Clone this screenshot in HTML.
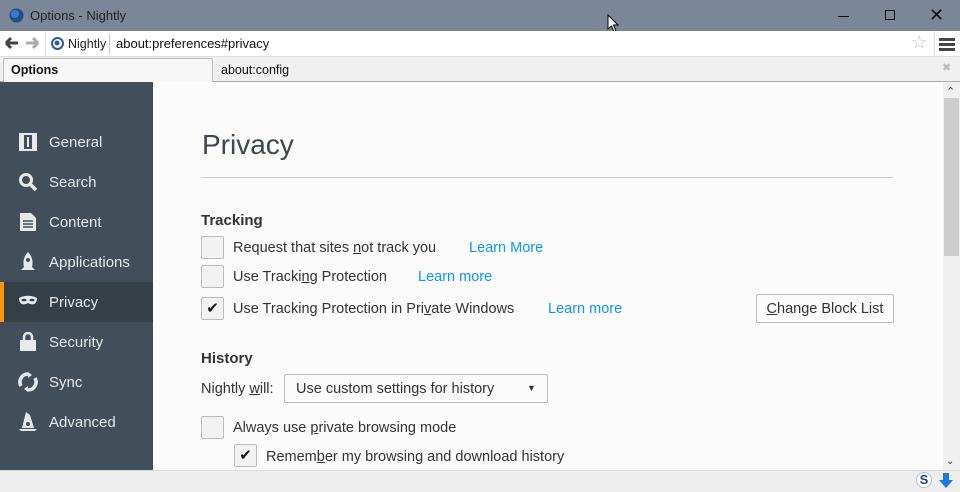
<!DOCTYPE html>
<html><head><meta charset="utf-8"><style>
*{margin:0;padding:0;box-sizing:border-box}
body{width:960px;height:492px;overflow:hidden;font-family:"Segoe UI","Liberation Sans",sans-serif;background:#fbfbfb;position:relative;color:#333}
.abs{position:absolute}
#title{left:0;top:0;width:960px;height:31px;background:#7b8799}
#title span{position:absolute;left:30px;top:8px;font-size:13px;color:#222}
#nav{left:0;top:31px;width:960px;height:26px;background:#fff;border-bottom:1px solid #ddd}
#tabs{left:0;top:57px;width:960px;height:25px;background:#f0f0f0;border-bottom:1px solid #aaa}
#side{left:0;top:82px;width:153px;height:388px;background:#424f5a}
.item{position:absolute;left:0;width:153px;height:40px;color:#e6e9ec;font-size:15px}
.item span{position:absolute;left:49px;top:12px}
.item svg{position:absolute;left:18px;top:10px}
.sel{background:#343f48}
.sel:before{content:"";position:absolute;left:0;top:0;width:4px;height:40px;background:#ff9500}
.cb{position:absolute;left:201px;width:23px;height:23px;border:1px solid #bbb;border-radius:2px;background:#f2f2f2}
.t{position:absolute;font-size:14.5px;color:#333}
.l{position:absolute;font-size:14.5px;color:#0996f8}
h2{position:absolute;font-size:15px;font-weight:bold;color:#333}
</style></head><body>
<div id="title" class="abs">
<svg class="abs" style="left:9px;top:8px" width="15" height="15"><circle cx="7.5" cy="7.5" r="7" fill="#1f4e8c"/><circle cx="6" cy="6" r="4" fill="#3a7bd5"/></svg>
<span>Options - Nightly</span>
<div class="abs" style="left:838px;top:16px;width:11px;height:1px;background:#111"></div>
<div class="abs" style="left:885px;top:10px;width:10px;height:10px;border:1px solid #111"></div>
<div class="abs" style="left:929px;top:5px;font-size:18px;color:#111">✕</div>
<svg class="abs" style="left:607px;top:14px" width="14" height="20"><path d="M1 1 L1 15 L4.5 12 L7 18 L9 17 L6.5 11 L11 11 Z" fill="#fff" stroke="#000"/></svg>
</div>
<div id="nav" class="abs">
<svg class="abs" style="left:4px;top:5px" width="38" height="14"><path d="M2 7 H14 M2 7 L7 2 M2 7 L7 12" stroke="#444" stroke-width="3" fill="none"/><path d="M22 7 H34 M34 7 L29 2 M34 7 L29 12" stroke="#aaa" stroke-width="3" fill="none"/></svg>
<div class="abs" style="left:45px;top:0;width:1px;height:25px;background:#ddd"></div>
<svg class="abs" style="left:51px;top:6px" width="13" height="13"><circle cx="6.5" cy="6.5" r="5.5" fill="#fff" stroke="#2a5aa0" stroke-width="2"/><circle cx="6" cy="6" r="2.5" fill="#2a5aa0"/></svg>
<div class="abs" style="left:68px;top:6px;font-size:12.5px;color:#222">Nightly</div>
<div class="abs" style="left:109px;top:3px;width:1px;height:20px;background:#ccc"></div>
<div class="abs" style="left:116px;top:5px;font-size:13px;color:#111">about:preferences#privacy</div>
<div class="abs" style="left:911px;top:1px;font-size:18px;color:#bbb">☆</div>
<div class="abs" style="left:934px;top:0;width:1px;height:26px;background:#ddd"></div>
<div class="abs" style="left:939px;top:7px;width:16px;height:3px;background:#444;box-shadow:0 5px 0 #444,0 10px 0 #444"></div>
</div>
<div id="tabs" class="abs">
<div class="abs" style="left:3px;top:1px;width:210px;height:24px;background:#f7f7f7;border:1px solid #bbb;border-bottom:none;border-radius:2px 2px 0 0"></div>
<div class="abs" style="left:11px;top:6px;font-size:12.5px;font-weight:bold;color:#111">Options</div>
<div class="abs" style="left:221px;top:6px;font-size:12.5px;color:#111">about:config</div>
<div class="abs" style="left:942px;top:4px;font-size:11px;color:#bbb">✖</div>
</div>
<div id="side" class="abs">
<div class="item" style="top:40px"><svg width="20" height="20"><rect x="1" y="1" width="18" height="18" fill="#e6e9ec"/><rect x="6" y="3" width="8" height="14" fill="#424f5a"/><rect x="9" y="5" width="2" height="10" fill="#e6e9ec"/></svg><span>General</span></div>
<div class="item" style="top:80px"><svg width="20" height="20"><circle cx="8" cy="8" r="5.5" fill="none" stroke="#e6e9ec" stroke-width="3"/><path d="M12 12 L18 18" stroke="#e6e9ec" stroke-width="3.5"/></svg><span>Search</span></div>
<div class="item" style="top:120px"><svg width="20" height="20"><path d="M2 1 H13 L18 6 V19 H2 Z" fill="#e6e9ec"/><path d="M5 9H15M5 12H15M5 15H15" stroke="#424f5a" stroke-width="1.5"/></svg><span>Content</span></div>
<div class="item" style="top:160px"><svg width="20" height="20"><path d="M10 0 C15 5 15 11 14 15 L17 18 H3 L6 15 C5 11 5 5 10 0Z" fill="#e6e9ec"/><circle cx="10" cy="8" r="2" fill="#424f5a"/></svg><span>Applications</span></div>
<div class="item sel" style="top:200px"><svg width="20" height="20"><path d="M1 6 C6 3 14 3 19 6 C19 12 15 14 10 11 C5 14 1 12 1 6Z" fill="#e6e9ec"/><ellipse cx="6" cy="8" rx="2.5" ry="1.3" fill="#343f48"/><ellipse cx="14" cy="8" rx="2.5" ry="1.3" fill="#343f48"/></svg><span>Privacy</span></div>
<div class="item" style="top:240px"><svg width="20" height="20"><path d="M6 8 V5 A4 4 0 0 1 14 5 V8" fill="none" stroke="#e6e9ec" stroke-width="2.5"/><rect x="2" y="8" width="16" height="11" fill="#e6e9ec"/></svg><span>Security</span></div>
<div class="item" style="top:280px"><svg width="20" height="20"><path d="M10 2 A8 8 0 0 0 3 14 M10 18 A8 8 0 0 0 17 6" fill="none" stroke="#e6e9ec" stroke-width="3.5"/><path d="M10 0 L14 3 L10 6Z M10 20 L6 17 L10 14Z" fill="#e6e9ec"/></svg><span>Sync</span></div>
<div class="item" style="top:320px"><svg width="20" height="20"><path d="M8 0 L12 3 L16 16 H4Z" fill="#e6e9ec"/><path d="M1 17 H19 L17 19 H3Z" fill="#e6e9ec"/><circle cx="10" cy="12" r="2" fill="#424f5a"/></svg><span>Advanced</span></div>
</div>
<div class="abs" style="left:943px;top:82px;width:17px;height:388px;background:#f0f0f0"></div>
<div class="abs" style="left:944px;top:98px;width:15px;height:158px;background:#cdcdcd"></div>
<div class="abs" style="left:946px;top:85px;font-size:11px;color:#444">⌃</div>
<div class="abs" style="left:946px;top:456px;font-size:10px;color:#444">⌄</div>
<div class="abs" style="left:202px;top:129px;font-size:28px;color:#3f464d">Privacy</div>
<div class="abs" style="left:201px;top:177px;width:692px;height:1px;background:#ccc"></div>
<h2 style="left:201px;top:212px">Tracking</h2>
<div class="cb" style="top:236px"></div><div class="t" style="left:233px;top:240px">Request that sites <u>n</u>ot track you</div><div class="l" style="left:469px;top:240px">Learn More</div>
<div class="cb" style="top:265px"></div><div class="t" style="left:233px;top:269px">Use Tracki<u>n</u>g Protection</div><div class="l" style="left:418px;top:269px">Learn more</div>
<div class="cb" style="top:297px;text-align:center;font-size:15px;line-height:21px;color:#111">✔</div><div class="t" style="left:233px;top:301px">Use Tracking Protection in Pri<u>v</u>ate Windows</div><div class="l" style="left:548px;top:301px">Learn more</div>
<div class="abs" style="left:756px;top:294px;width:138px;height:29px;border:1px solid #bbb;border-radius:2px;background:#fbfbfb;font-size:14.5px;text-align:center;line-height:28px;color:#333"><u>C</u>hange Block List</div>
<h2 style="left:201px;top:350px">History</h2>
<div class="t" style="left:201px;top:381px">Nightly <u>w</u>ill:</div>
<div class="abs" style="left:284px;top:374px;width:264px;height:29px;border:1px solid #bbb;border-radius:2px;background:#fbfbfb"><span style="position:absolute;left:11px;top:6px;font-size:14.5px">Use custom settings for history</span><span style="position:absolute;left:242px;top:8px;font-size:9px">▼</span></div>
<div class="cb" style="top:416px"></div><div class="t" style="left:233px;top:420px">Always use <u>p</u>rivate browsing mode</div>
<div class="cb" style="left:234px;top:444px;text-align:center;font-size:15px;line-height:21px;color:#111">✔</div><div class="t" style="left:266px;top:449px">Remem<u>b</u>er my browsing and download history</div>
<div class="abs" style="left:0;top:470px;width:960px;height:22px;background:#eeeeee;border-top:1px solid #ddd"></div>
<div class="abs" style="left:916px;top:472px;width:16px;height:16px;border-radius:50%;background:#fff;border:1px solid #bbb;font:bold 13px 'Liberation Sans',sans-serif;color:#1d3f8f;text-align:center;line-height:14px">S</div>
<svg class="abs" style="left:939px;top:473px" width="14" height="16"><path d="M4 0H10V7H14L7 15L0 7H4Z" fill="#1a7ae0"/></svg>
</body></html>
